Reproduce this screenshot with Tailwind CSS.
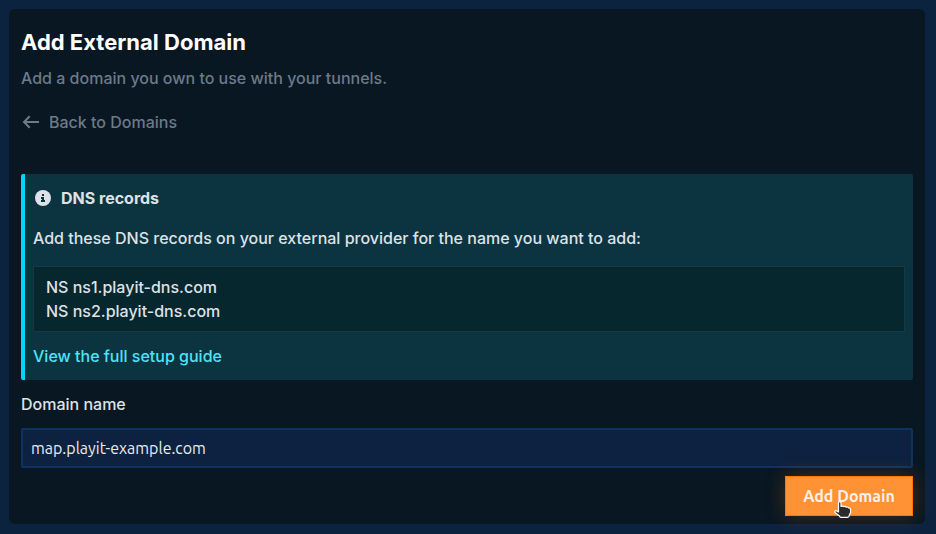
<!DOCTYPE html>
<html lang="en">
<head>
  <meta charset="UTF-8">
  <meta name="viewport" content="width=device-width, initial-scale=1">
  <title>Add External Domain</title>
  <script src="https://cdn.jsdelivr.net/npm/@tailwindcss/browser@4"></script>
</head>
<body class="min-h-screen bg-[#0c2340] pt-[9px] pr-[11px] pb-[10px] pl-[9px] font-['Inter',sans-serif] text-base font-medium text-[#dee2e6]">
  <main class="rounded-md bg-[#081722] px-3 pt-5 pb-2">
    <h1 class="text-[22px] leading-[26px] font-bold text-white">Add External Domain</h1>
    <p class="mt-[11px] text-[#6c7a89]">Add a domain you own to use with your tunnels.</p>

    <a href="#" class="mt-5 flex w-fit items-center gap-2 text-[#6c7a89]">
      <svg class="h-5 w-5" viewBox="0 0 20 20" fill="none" stroke="currentColor" stroke-width="2" stroke-linecap="square" stroke-linejoin="miter">
        <path d="M3.500 10H17M8 5L3 10L8 15" />
      </svg>
      Back to Domains
    </a>

    <section class="mt-10 rounded-xs border-l-4 border-[#00d4ff] bg-[#0b3440] p-3 pr-2 pl-2">
      <h2 class="flex items-center gap-2 font-bold">
        <svg class="h-5 w-5" viewBox="0 0 20 20">
          <circle cx="10" cy="10" r="8" fill="#dee2e6" />
          <path d="M9 6h2v2H9zM8 9h3v3h1v2H8v-2h1v-1H8z" fill="#0b3440" />
        </svg>
        DNS records
      </h2>
      <p class="mt-4">Add these DNS records on your external provider for the name you want to add:</p>
      <div class="mt-4 border border-[#153a44] bg-[#07272f] px-3 py-2">
        <p>NS ns1.playit-dns.com</p>
        <p>NS ns2.playit-dns.com</p>
      </div>
      <a href="#" class="mt-3 block w-fit text-[#4de4f7]">View the full setup guide</a>
    </section>

    <form class="mt-3 flex flex-col">
      <label for="domain">Domain name</label>
      <input id="domain" type="text" value="map.playit-example.com" class="mt-3 h-10 w-full rounded-xs border-2 border-[#10335e] bg-[#0c2240] px-2 font-['Ubuntu','Noto_Sans',sans-serif] font-normal text-[#e9ecef] outline-none">
      <button type="button" class="relative mt-2 h-10 w-32 cursor-pointer self-end border border-[#ff7700] bg-[#ff9234] font-['Ubuntu','Noto_Sans',sans-serif] font-semibold text-[#fdf0e6] shadow-[0_0_20px_rgba(255,119,0,0.25)]">
        Add Domain
        <!-- hand pointer -->
        <svg class="absolute top-6 left-12 h-[18px] w-[18px]" viewBox="0 0 18 18">
          <path d="M4.500 2Q4.500 .7 5.700 .7T7 2V5.500Q8.500 4.600 9.700 5.600Q11.200 4.900 12.200 6.200Q13.800 5.600 14.600 6.800Q16.600 6.800 16.600 8.600V11.500L15.200 14.200V15Q15 16.300 13.500 16.300H7Q5.800 16.300 5.500 15L1 11.500Q.4 9.500 2.300 9.700L4.500 11Z" fill="#2b2b2b" stroke="#fff" stroke-width="1.200" stroke-linejoin="round" />
        </svg>
      </button>
    </form>
  </main>
</body>
</html>
